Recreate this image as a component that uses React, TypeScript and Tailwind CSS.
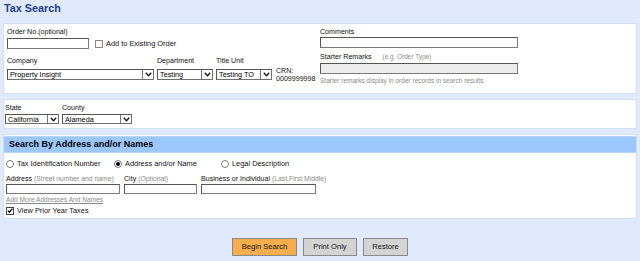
import type { ReactNode } from 'react';

// ────────────────────────────────────────────
// Small form pieces
// ────────────────────────────────────────────

function TextBox({ w, h = 'h-[11px]', gray = false }: { w: string; h?: string; gray?: boolean }) {
  return (
    <div
      className={`${w} ${h} border border-[#7a7a7a] border-t-[#555] border-l-[#555] ${
        gray ? 'bg-[#ececec]' : 'bg-white'
      }`}
    />
  );
}

function Chevron() {
  return (
    <svg width="7" height="5" viewBox="0 0 7 5">
      <path d="M0.8 0.8 L3.5 3.8 L6.2 0.8" fill="none" stroke="#111" strokeWidth="1.3" />
    </svg>
  );
}

function SelectBox({ w, value, h = 'h-[11px]' }: { w: string; value: string; h?: string }) {
  return (
    <div
      className={`${w} ${h} flex items-stretch border border-[#6e6e6e] border-t-[#555] border-l-[#555] bg-white`}
    >
      <span className="flex-1 pl-[2px] leading-[9px] text-[7.3px] text-black overflow-hidden whitespace-nowrap">
        {value}
      </span>
      <span className="w-[11px] flex items-center justify-center border-l border-[#777] bg-white">
        <Chevron />
      </span>
    </div>
  );
}

function Label({ children, className = '' }: { children: ReactNode; className?: string }) {
  return <div className={`h-[9px] leading-[9px] text-[#111] whitespace-nowrap ${className}`}>{children}</div>;
}

function Hint({ children }: { children: ReactNode }) {
  return <span className="text-[6.8px] text-[#8a8a8a]">{children}</span>;
}

function Radio({ checked = false }: { checked?: boolean }) {
  return (
    <span className="w-[8px] h-[8px] rounded-full border border-[#7a7a7a] bg-white flex items-center justify-center">
      {checked && <span className="w-[4px] h-[4px] rounded-full bg-black" />}
    </span>
  );
}

function Panel({ children, className = '' }: { children: ReactNode; className?: string }) {
  return <div className={`mx-[3px] w-[634px] bg-white border border-[#d2e0f5] ${className}`}>{children}</div>;
}

function Button({ children, w, primary = false }: { children: ReactNode; w: string; primary?: boolean }) {
  return (
    <button
      className={`${w} h-[18px] border border-[#8a8a8a] text-[7.6px] text-[#111] ${
        primary ? 'bg-[#f6ad4d]' : 'bg-[#d3d3d3]'
      }`}
    >
      {children}
    </button>
  );
}

// ────────────────────────────────────────────
// App root
// ────────────────────────────────────────────

export default function App() {
  return (
    <div className="w-[640px] h-[261px] bg-[#e0eafc] font-['Liberation_Sans',Arial,sans-serif] text-[7.1px] overflow-hidden">
      {/* Title */}
      <div className="h-[23px] pl-[4px] pt-[2px] text-[10.8px] leading-[12px] font-bold text-[#1d3d8f]">
        Tax Search
      </div>

      {/* Order panel */}
      <Panel className="h-[71px] flex">
        <div className="w-[312px] pl-[3px] pt-[4px]">
          <Label>Order No.(optional)</Label>
          <div className="flex items-center mt-[1px]">
            <TextBox w="w-[82px]" />
            <span className="ml-[6px] w-[8px] h-[8px] border border-[#888] bg-white" />
            <span className="ml-[3px] text-[7.4px] text-[#111]">Add to Existing Order</span>
          </div>
          <div className="flex mt-[8px]">
            <div className="w-[150px]">
              <Label>Company</Label>
              <div className="mt-[3px]">
                <SelectBox w="w-[147px]" value="Property Insight" />
              </div>
            </div>
            <div className="w-[59px]">
              <Label>Department</Label>
              <div className="mt-[3px]">
                <SelectBox w="w-[56px]" value="Testing" />
              </div>
            </div>
            <div className="w-[60px]">
              <Label>Title Unit</Label>
              <div className="mt-[3px]">
                <SelectBox w="w-[56px]" value="Testing TO" />
              </div>
            </div>
            <div className="pt-[10px] leading-[8px] text-[#111]">
              <div>CRN:</div>
              <div>0009999998</div>
            </div>
          </div>
        </div>
        <div className="pl-[4px] pt-[4px]">
          <Label>Comments</Label>
          <TextBox w="w-[198px]" />
          <Label className="mt-[4px]">
            Starter Remarks <span className="ml-[9px] text-[6.4px] text-[#8a8a8a]">(e.g. Order Type)</span>
          </Label>
          <div className="mt-[2px]">
            <TextBox w="w-[198px]" gray />
          </div>
          <div className="mt-[3px] h-[8px] leading-[8px] text-[6.5px] text-[#8a8a8a] whitespace-nowrap">
            Starter remarks display in order records in search results.
          </div>
        </div>
      </Panel>

      {/* State / County */}
      <Panel className="mt-[5px] h-[30px] flex pl-[1px] pt-[4px]">
        <div className="w-[57px]">
          <Label>State</Label>
          <div className="mt-[1px]">
            <SelectBox w="w-[54px]" h="h-[10px]" value="California" />
          </div>
        </div>
        <div>
          <Label>County</Label>
          <div className="mt-[1px]">
            <SelectBox w="w-[70px]" h="h-[10px]" value="Alameda" />
          </div>
        </div>
      </Panel>

      {/* Search by address */}
      <Panel className="mt-[5px] h-[85px] pt-[1px]">
        <div className="h-[17px] bg-[#9cc7fd] border-y border-[#b6d6ff] pl-[5px] text-[9px] leading-[15px] font-bold text-black">
          Search By Address and/or Names
        </div>
        <div className="pl-[2px]">
          <div className="flex items-center h-[10px] mt-[6px] text-[7.4px] text-[#111]">
            <Radio />
            <span className="ml-[3px] w-[97px]">Tax Identification Number</span>
            <Radio checked />
            <span className="ml-[3px] w-[96px]">Address and/or Name</span>
            <Radio />
            <span className="ml-[3px]">Legal Description</span>
          </div>
          <div className="flex mt-[5px]">
            <div className="w-[118px]">
              <Label>
                Address <Hint>(Street number and name)</Hint>
              </Label>
              <div className="mt-[1px]">
                <TextBox w="w-[114px]" h="h-[10px]" />
              </div>
            </div>
            <div className="w-[77px]">
              <Label>
                City <Hint>(Optional)</Hint>
              </Label>
              <div className="mt-[1px]">
                <TextBox w="w-[73px]" h="h-[10px]" />
              </div>
            </div>
            <div>
              <Label>
                Business or Individual <Hint>(Last,First Middle)</Hint>
              </Label>
              <div className="mt-[1px]">
                <TextBox w="w-[115px]" h="h-[10px]" />
              </div>
            </div>
          </div>
          <div className="mt-[2px] h-[8px] leading-[8px] text-[6.6px] text-[#8a8a8a] underline">
            Add More Addresses And Names
          </div>
          <div className="mt-[2px] flex items-center h-[9px] text-[7.4px] text-[#111]">
            <span className="w-[8px] h-[8px] border border-[#444] bg-white flex items-center justify-center">
              <svg width="7" height="7" viewBox="0 0 7 7">
                <path d="M1 3.6 L2.8 5.5 L6.2 1.2" fill="none" stroke="#000" strokeWidth="1.4" />
              </svg>
            </span>
            <span className="ml-[3px]">View Prior Year Taxes</span>
          </div>
        </div>
      </Panel>

      {/* Actions */}
      <div className="mt-[19px] flex justify-center gap-[6px]">
        <Button w="w-[65px]" primary>
          Begin Search
        </Button>
        <Button w="w-[54px]">Print Only</Button>
        <Button w="w-[45px]">Restore</Button>
      </div>
    </div>
  );
}
